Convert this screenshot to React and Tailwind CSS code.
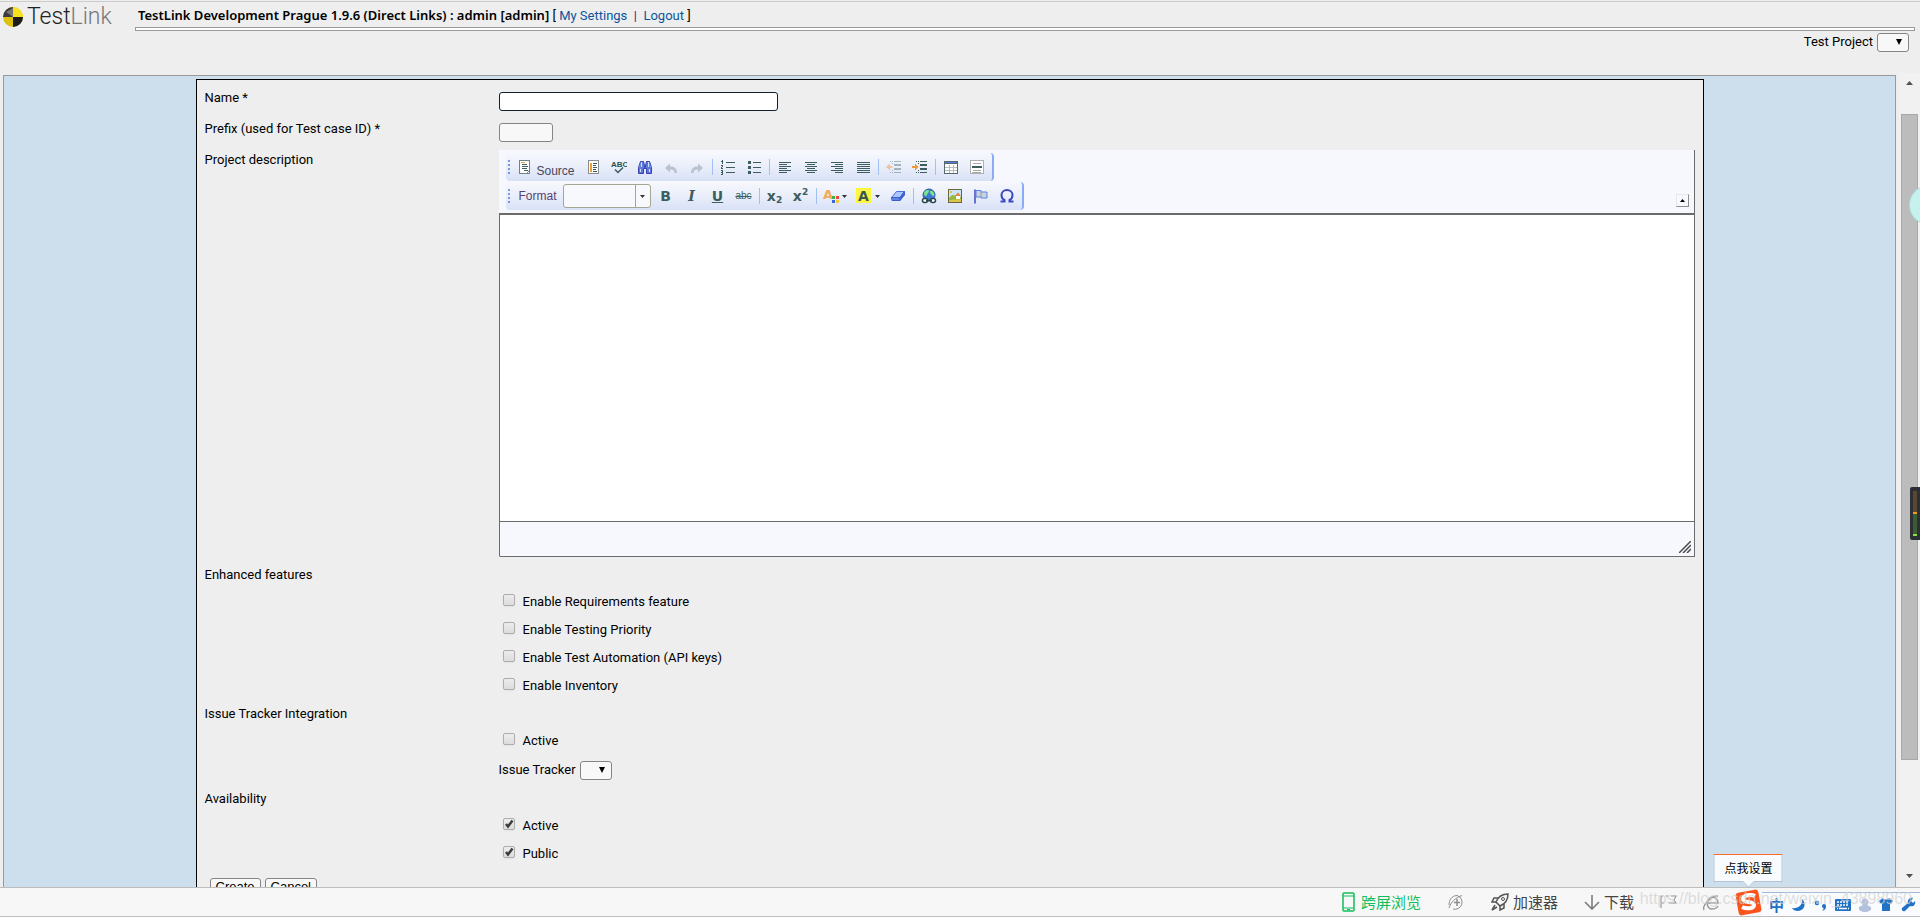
import { useState } from "react";

const FEATURES = [
  { id: "requirements", label: "Enable Requirements feature" },
  { id: "priority", label: "Enable Testing Priority" },
  { id: "automation", label: "Enable Test Automation (API keys)" },
  { id: "inventory", label: "Enable Inventory" },
];

const Svg = ({ w = 16, h = 16, children, className = "" }) => (
  <svg
    width={w}
    height={h}
    viewBox={`0 0 ${w} ${h}`}
    fill="none"
    className={`shrink-0 ${className}`}
    aria-hidden="true"
  >
    {children}
  </svg>
);

const Lines = ({ rows, color = "#3d5d5f" }) => (
  <g fill={color} shapeRendering="crispEdges">
    {rows.map(([x, y, w, h = 1], i) => (
      <rect key={i} x={x} y={y} width={w} height={h} />
    ))}
  </g>
);

/* ---------- toolbar icons ---------- */

const SourceIcon = () => (
  <Svg>
    <rect x="2.5" y="1.5" width="10" height="13" fill="#fff" stroke="#6c8586" />
    <Lines rows={[[5, 5, 5], [5, 7, 6], [5, 9, 5], [7, 11, 4]]} />
    <Lines color="#eda54c" rows={[[4, 3, 4]]} />
    <path d="M9.500 14.500 L12.500 11.500" stroke="#6c8586" />
  </Svg>
);

const TemplatesIcon = () => (
  <Svg>
    <rect x="3.500" y="1.500" width="10" height="13" fill="#fff" stroke="#8c8c8c" />
    <Lines rows={[[8, 4, 4], [8, 6, 3], [8, 8, 4], [8, 10, 3], [8, 12, 4]]} />
    <Lines color="#f0a030" rows={[[5, 4, 2, 9]]} />
  </Svg>
);

const SpellIcon = () => (
  <Svg>
    <text x="0" y="8" fontSize="8" fontWeight="bold" fontFamily="Liberation Sans, sans-serif" fill="#2c5154">
      ABC
    </text>
    <path d="M4 10.500 L7 13.500 L12 8.500" stroke="#3d5d5f" strokeWidth="1.500" />
  </Svg>
);

const FindIcon = () => (
  <Svg>
    <path d="M3.500 2.500h3l1 4h1l1-4h3l2 6v6h-5v-5h-3v5h-5v-6z" fill="#5f78dc" stroke="#3b3fb0" />
    <path d="M4.500 3v5M11.500 3v5M3.500 10v3M12.500 10v3" stroke="#cfe2ff" />
    <path d="M2.500 8.500l1-4M13.500 8.500l-1-4" stroke="#5f9cf0" />
    <path d="M7 6.500h2v2h-2z" fill="#3b3fb0" />
  </Svg>
);

const UndoIcon = ({ flip }) => (
  <Svg className={flip ? "-scale-x-100" : ""}>
    <path d="M2 9 L7 4.500 V7.500 C11 7.500 14 9 14 14 H11.500 C11.500 11.500 10 10.500 7 10.500 V13.500 Z" fill="#b9c2cd" />
  </Svg>
);

const NumberedIcon = () => (
  <Svg>
    <Lines
      rows={[
        [6, 3, 9], [6, 8, 9], [6, 13, 9],
        [2, 1, 1, 4], [1, 2, 1],
        [1, 6, 2], [2, 7, 1], [1, 8, 1], [1, 9, 2],
        [1, 11, 2], [2, 12, 1], [1, 13, 2], [2, 14, 1], [1, 15, 2],
      ]}
    />
  </Svg>
);

const BulletedIcon = () => (
  <Svg>
    <Lines rows={[[2, 2, 3, 3], [2, 7, 3, 3], [2, 12, 3, 3], [7, 3, 8], [7, 8, 8], [7, 13, 8]]} />
  </Svg>
);

const ALIGN = {
  left: [[2, 3, 12], [2, 5, 8], [2, 7, 12], [2, 9, 8], [2, 11, 12], [2, 13, 8]],
  center: [[2, 3, 12], [4, 5, 8], [2, 7, 12], [4, 9, 8], [2, 11, 12], [4, 13, 8]],
  right: [[2, 3, 12], [6, 5, 8], [2, 7, 12], [6, 9, 8], [2, 11, 12], [6, 13, 8]],
  justify: [[2, 3, 13], [2, 5, 13], [2, 7, 13], [2, 9, 13], [2, 11, 13], [2, 13, 13]],
};

const AlignIcon = ({ type }) => (
  <Svg>
    <Lines rows={ALIGN[type]} />
  </Svg>
);

const IndentIcon = ({ out }) => (
  <Svg className={out ? "opacity-40" : ""}>
    <Lines
      rows={[
        [4, 2, 1], [6, 2, 1], [8, 2, 7], [8, 5, 7, 2], [8, 9, 7, 2],
        [4, 13, 1], [6, 13, 1], [8, 13, 7], [6, 4, 1], [6, 11, 1],
      ]}
    />
    {out ? (
      <path d="M0 8 L4 4.500 V7 H6.500 V9 H4 V11.500 Z" fill="#f08a1c" />
    ) : (
      <path d="M6.500 8 L3 4.500 V7 H0 V9 H3 V11.500 Z" fill="#f0983c" />
    )}
  </Svg>
);

const TableIcon = () => (
  <Svg>
    <rect x="1.500" y="2.500" width="13" height="12" fill="#fff" stroke="#57696c" />
    <rect x="1" y="2" width="14" height="3" fill="#57696c" />
    <rect x="2" y="3" width="12" height="1" fill="#4f7be0" />
    <path d="M6.500 6v8M10.500 6v8M2 8.500h12M2 11.500h12" stroke="#b4bcbe" shapeRendering="crispEdges" />
  </Svg>
);

const RuleIcon = () => (
  <Svg>
    <rect x="1.500" y="1.500" width="13" height="13" fill="#fff" stroke="#b0b0b0" />
    <Lines color="#a8a8a8" rows={[[4, 4, 8], [4, 11, 8], [3, 13, 9]]} />
    <Lines rows={[[3, 7, 10, 2]]} />
  </Svg>
);

const EraserIcon = () => (
  <Svg>
    <path d="M1.500 9.500 L6.500 3.500 H14.500 L10 9.500 Z" fill="#a9c6ff" stroke="#4a6fd8" />
    <path d="M1.500 9.500 H10 V12.500 H2 Z" fill="#5d86ea" stroke="#3f5fc8" />
    <path d="M10 9.500 L14.500 3.500 V7 L10 12.500 Z" fill="#3f66d8" stroke="#3f5fc8" />
  </Svg>
);

const LinkIcon = () => (
  <Svg>
    <circle cx="8" cy="7" r="6" fill="#3f78d8" stroke="#2b56a8" />
    <path d="M3 5 C4 2 8 1 8 3 C8 5 6 5 6 7 C5 9 3 8 3 5Z M9 3 C12 2 14 6 13 8 C11 9 11 6 9.500 6Z" fill="#7ae884" />
    <rect x="1.500" y="10.500" width="5" height="4" rx="2" fill="#fff" stroke="#25484a" strokeWidth="1.500" />
    <rect x="9.500" y="10.500" width="5" height="4" rx="2" fill="#fff" stroke="#25484a" strokeWidth="1.500" />
    <path d="M5 12.500h6" stroke="#25484a" strokeWidth="1.500" />
  </Svg>
);

const ImageIcon = () => (
  <Svg>
    <rect x="1.500" y="1.500" width="13" height="13" fill="#c7e6f6" stroke="#6a6444" />
    <path d="M2 10 L5 7 L14 9 V14 H2Z" fill="#8fba3c" />
    <path d="M2 12 L14 11 V14 H2Z" fill="#d9c64a" />
    <rect x="9" y="8" width="4" height="3" fill="#fff" />
    <path d="M7.500 8 L11 4.500 L14 8Z" fill="#e6863a" />
    <rect x="3" y="3" width="2" height="2" fill="#f3b93a" />
  </Svg>
);

const FlagIcon = () => (
  <Svg>
    <path d="M2 1.500v14" stroke="#3e48c0" strokeWidth="1.500" />
    <path d="M3 2.500h5v1.500h6v6H8V9H3z" fill="#ccd2dd" stroke="#5b82e0" />
    <path d="M8 4v5" stroke="#8b96ad" />
  </Svg>
);

const OmegaIcon = () => (
  <Svg>
    <path
      d="M1.500 13.500H5.500V12C3.500 11 2.500 9.500 2.500 7.200C2.500 4 5 2 8 2C11 2 13.500 4 13.500 7.200C13.500 9.500 12.500 11 10.500 12V13.500H14.500"
      stroke="#3e48c0"
      strokeWidth="2"
    />
  </Svg>
);

const TextColorIcon = () => (
  <Svg>
    <text x="0" y="11" fontSize="13" fontWeight="bold" fontFamily="DejaVu Sans, sans-serif" fill="#f2ab5c">
      A
    </text>
    <g shapeRendering="crispEdges">
      <rect x="9" y="8" width="3" height="3" fill="#3fae4a" />
      <rect x="13" y="8" width="3" height="3" fill="#f04438" />
      <rect x="9" y="12" width="3" height="3" fill="#3a66e0" />
      <rect x="13" y="12" width="3" height="3" fill="#f8c838" />
    </g>
  </Svg>
);

const BgColorIcon = () => (
  <Svg>
    <rect width="15" height="15" fill="#fbf73c" />
    <text x="2" y="13" fontSize="14" fontWeight="bold" fontFamily="DejaVu Sans, sans-serif" fill="#3a5658">
      A
    </text>
  </Svg>
);

const SmallArrow = () => (
  <Svg w={5} h={3}>
    <path d="M0 0h5L2.500 3z" fill="#333" />
  </Svg>
);

/* ---------- toolbar parts ---------- */

const ToolButton = ({ title, wide, children }) => (
  <button
    type="button"
    title={title}
    className={`flex h-full shrink-0 items-center justify-center text-[#3d5d5f] ${
      wide ? "w-[33px]" : "w-[26px]"
    }`}
  >
    {children}
  </button>
);

const Separator = () => <span className="mx-[2px] h-4 w-px shrink-0 bg-[#a3c0f6]" />;

const Grip = () => (
  <Svg w={3} h={15} className="ml-[2px]">
    <g fill="#7b97e3">
      <rect y="0" width="2" height="2" />
      <rect y="4" width="2" height="2" />
      <rect y="8" width="2" height="2" />
      <rect y="12" width="2" height="2" />
    </g>
  </Svg>
);

const ToolGroup = ({ children }) => (
  <div className="flex h-7 w-max items-center rounded-[4px] border-r-2 border-[#8aabf5] bg-linear-to-b from-[#f7f8fd] via-[#e9eefa] to-[#d9e1f7] pr-[2px]">
    <Grip />
    {children}
  </div>
);

const Editor = () => (
  <div className="flex h-[407px] flex-col border-x border-b border-[#6b6b6b] border-l-transparent bg-[#f7f8fd]">
    <div className="flex h-[63px] shrink-0 items-end justify-between pt-[3px] pr-[5px] pb-[3px] pl-[6px]">
      <div className="flex flex-col gap-px">
        <ToolGroup>
          <button
            type="button"
            className="flex h-full w-[69px] shrink-0 items-center gap-1 pl-[6px] font-['Liberation_Sans',sans-serif] text-xs text-[#474758]"
          >
            <SourceIcon />
            <span className="pt-2">Source</span>
          </button>
          <ToolButton title="Templates"><TemplatesIcon /></ToolButton>
          <ToolButton title="Check Spelling"><SpellIcon /></ToolButton>
          <ToolButton title="Find"><FindIcon /></ToolButton>
          <ToolButton title="Undo"><UndoIcon /></ToolButton>
          <ToolButton title="Redo"><UndoIcon flip /></ToolButton>
          <Separator />
          <ToolButton title="Insert/Remove Numbered List"><NumberedIcon /></ToolButton>
          <ToolButton title="Insert/Remove Bulleted List"><BulletedIcon /></ToolButton>
          <Separator />
          <ToolButton title="Left Justify"><AlignIcon type="left" /></ToolButton>
          <ToolButton title="Center Justify"><AlignIcon type="center" /></ToolButton>
          <ToolButton title="Right Justify"><AlignIcon type="right" /></ToolButton>
          <ToolButton title="Block Justify"><AlignIcon type="justify" /></ToolButton>
          <Separator />
          <ToolButton title="Decrease Indent"><IndentIcon out /></ToolButton>
          <ToolButton title="Increase Indent"><IndentIcon /></ToolButton>
          <Separator />
          <ToolButton title="Table"><TableIcon /></ToolButton>
          <ToolButton title="Insert Horizontal Line"><RuleIcon /></ToolButton>
        </ToolGroup>
        <ToolGroup>
          <label
            htmlFor="format"
            className="w-[52px] shrink-0 pl-2 font-['Liberation_Sans',sans-serif] text-xs text-[#5b3f74]"
          >
            Format
          </label>
          <div className="relative flex h-6 w-[88px] shrink-0 items-center rounded-[3px] border border-[#a4a693] bg-[#f8f9fd]">
            <select id="format" className="h-full w-full appearance-none bg-transparent" />
            <span className="pointer-events-none absolute inset-y-0 right-0 flex w-[15px] items-center justify-center border-l border-[#a4a693]">
              <SmallArrow />
            </span>
          </div>
          <span className="w-[2px] shrink-0" />
          <ToolButton title="Bold">
            <span className="font-['DejaVu_Sans',sans-serif] text-sm font-bold">B</span>
          </ToolButton>
          <ToolButton title="Italic">
            <span className="font-['DejaVu_Serif',serif] text-sm font-bold italic">I</span>
          </ToolButton>
          <ToolButton title="Underline">
            <span className="font-['DejaVu_Sans',sans-serif] text-sm font-bold underline">U</span>
          </ToolButton>
          <ToolButton title="Strike Through">
            <span className="font-['Liberation_Sans',sans-serif] text-[10px] line-through">abc</span>
          </ToolButton>
          <Separator />
          <ToolButton title="Subscript">
            <span className="flex items-center font-['DejaVu_Sans',sans-serif] text-sm font-bold leading-4">
              x<span className="pt-2 text-[9px] leading-3">2</span>
            </span>
          </ToolButton>
          <ToolButton title="Superscript">
            <span className="flex items-center font-['DejaVu_Sans',sans-serif] text-sm font-bold leading-4">
              x<span className="pb-2 text-[9px] leading-3">2</span>
            </span>
          </ToolButton>
          <Separator />
          <ToolButton title="Text Color" wide>
            <span className="flex items-center gap-[3px]"><TextColorIcon /><SmallArrow /></span>
          </ToolButton>
          <ToolButton title="Background Color" wide>
            <span className="flex items-center gap-[3px]"><BgColorIcon /><SmallArrow /></span>
          </ToolButton>
          <ToolButton title="Remove Format"><EraserIcon /></ToolButton>
          <Separator />
          <ToolButton title="Link"><LinkIcon /></ToolButton>
          <ToolButton title="Image"><ImageIcon /></ToolButton>
          <ToolButton title="Anchor"><FlagIcon /></ToolButton>
          <ToolButton title="Insert Special Character"><OmegaIcon /></ToolButton>
        </ToolGroup>
      </div>
      <button
        type="button"
        title="Collapse Toolbar"
        className="mb-[3px] flex size-[13px] items-center justify-center border border-[#e6e6ee] border-r-[#8c8c8c] border-b-[#8c8c8c]"
      >
        <Svg w={5} h={3}>
          <path d="M0 3h5L2.500 0z" fill="#000" />
        </Svg>
      </button>
    </div>
    <textarea
      aria-label="Project description"
      className="-ml-px min-h-0 flex-1 resize-none border-t-2 border-l border-b border-[#6b6b6b] bg-white p-2 outline-none"
    />
    <div className="-ml-px flex h-[34px] shrink-0 items-end justify-end border-l border-[#6b6b6b] p-[3px]">
      <Svg w={12} h={12}>
        <path d="M0 12L12 0M4 12L12 4M8 12L12 8" stroke="#4a4a4a" strokeWidth="1.500" />
      </Svg>
    </div>
  </div>
);

/* ---------- form parts ---------- */

const Row = ({ label, htmlFor, children }) => (
  <div className="flex min-h-[31px] items-start">
    <label htmlFor={htmlFor} className="w-[294px] shrink-0 leading-6">
      {label}
    </label>
    <div className="min-w-0 flex-1">{children}</div>
  </div>
);

const Heading = ({ children }) => <h2 className="flex h-[27px] items-center">{children}</h2>;

const Check = ({ id, label, initial = false }) => {
  const [checked, setChecked] = useState(initial);

  return (
    <div className="ml-[294px] flex h-7 items-center gap-2 pl-1">
      <span className="relative mb-1 flex size-3">
        <input
          id={id}
          type="checkbox"
          checked={checked}
          onChange={(e) => setChecked(e.target.checked)}
          className="size-3 appearance-none rounded-[2px] border border-[#adadad] bg-linear-to-b from-[#ededed] to-[#dcdcdc] shadow-xs"
        />
        {checked && (
          <Svg w={12} h={12} className="pointer-events-none absolute inset-0">
            <path d="M3 6L5 8.500L9.500 2.500" stroke="#3c3c3c" strokeWidth="2.500" />
          </Svg>
        )}
      </span>
      <label htmlFor={id}>{label}</label>
    </div>
  );
};

const EmptySelect = ({ id }) => (
  <span className="relative flex">
    <select
      id={id}
      className="h-[19px] w-8 appearance-none rounded-[3px] border border-[#858585] bg-[#f8f8f8]"
    />
    <Svg w={6} h={6} className="pointer-events-none absolute top-[6px] right-[7px]">
      <path d="M0 0h6L3 6z" fill="#000" />
    </Svg>
  </span>
);

const FormButton = ({ children }) => (
  <button
    type="button"
    className="h-5 rounded-[3px] border border-[#858585] bg-[#f8f8f8] px-[5px] pb-1 font-['Liberation_Sans',sans-serif] leading-4"
  >
    {children}
  </button>
);

const Header = () => (
  <header className="h-[72px] shrink-0 border-t border-[#ccc]">
    <div className="flex pr-[5px]">
      <div className="flex w-[135px] shrink-0 items-center gap-1 pl-[3px] font-['Roboto',sans-serif] text-[23px] leading-[30px] font-light">
        <Svg w={20} h={20}>
          <circle cx="10" cy="10" r="10" fill="#dcc010" />
          <path d="M10 10V0A10 10 0 0 1 20 10Z" fill="#f8e21c" />
          <path d="M10 10H0A10 10 0 0 1 10 0Z" fill="#3a3a3a" />
          <path d="M10 10H20A10 10 0 0 1 10 20Z" fill="#1c1c1c" />
          <path d="M10 10V1L3 5Z" fill="#777" />
        </Svg>
        <span className="text-[#222]">
          Test<span className="text-[#777]">Link</span>
        </span>
      </div>
      <div className="min-w-0 flex-1">
        <div className="h-[25px] pl-[3px] leading-[26px]">
          <b className="font-['Noto_Sans',sans-serif] font-semibold">
            TestLink Development Prague 1.9.6 (Direct Links) : admin [admin]
          </b>{" "}
          [{" "}
          <a href="#settings" className="text-[#0b559d]">My Settings</a>
          <span className="text-[#800060]"> &nbsp;|&nbsp; </span>
          <a href="#logout" className="text-[#0b559d]">Logout</a> ]
        </div>
        <div className="h-1 border border-[#999] bg-white" />
      </div>
    </div>
    <div className="flex items-center justify-end gap-1 pr-[11px]">
      <label htmlFor="project">Test Project</label>
      <EmptySelect id="project" />
    </div>
  </header>
);

const ScrollBar = () => (
  <div className="flex w-[21px] shrink-0 flex-col items-center bg-[#f1f1f1] pt-2 pr-px pb-[9px]">
    <Svg w={7} h={4}>
      <path d="M0 4h7L3.500 0z" fill="#505050" />
    </Svg>
    <div className="mt-[29px] flex min-h-0 w-[17px] flex-1 flex-col">
      <div className="h-[85%] border border-[#a8a8a8] bg-[#bcbcbc]" />
    </div>
    <Svg w={7} h={4}>
      <path d="M0 0h7L3.500 4z" fill="#505050" />
    </Svg>
  </div>
);

/* ---------- browser status bar ---------- */

const StatusBar = () => (
  <footer className="relative flex h-[30px] shrink-0 items-center justify-end border-y border-[#bdbdbd] bg-[#f7f7f7] font-['Noto_Sans_CJK_SC',sans-serif] text-[15px] text-[#444]">
    <button type="button" className="mr-[27px] flex items-center gap-[6px] text-[#10bf5c]">
      <Svg w={13} h={20}>
        <rect x="1" y="1" width="11" height="18" rx="1" stroke="#10bf5c" strokeWidth="1.500" />
        <path d="M1 4h11M1 16h11" stroke="#10bf5c" />
        <path d="M5 17.500h3" stroke="#10bf5c" />
      </Svg>
      跨屏浏览
    </button>
    <button type="button" title="加速" className="mr-[26px]">
      <Svg w={17} h={17}>
        <path d="M5 15A7 7 0 1 0 9 1.500C4 1.500 1 6 1 11M1 14C3 8 7 4 14 1.500" stroke="#8c8c8c" />
        <path d="M9 5v7M6 8.500h6" stroke="#8c8c8c" strokeWidth="1.500" />
      </Svg>
    </button>
    <button type="button" className="mr-[26px] flex items-center gap-1">
      <Svg w={18} h={18}>
        <path d="M5 9C7 4 11 1 17 1C17 7 14 11 9 13Z" stroke="#555" strokeWidth="1.500" />
        <path d="M7 5H3L1 9H5M13 11V15L9 17V13M4 12L1 17L6 14" stroke="#555" strokeWidth="1.500" />
        <circle cx="12" cy="6" r="1.500" stroke="#555" />
      </Svg>
      加速器
    </button>
    <button type="button" className="mr-[26px] flex items-center gap-1">
      <Svg w={16} h={16}>
        <path d="M8 1V14M1 8L8 15L15 8" stroke="#777" strokeWidth="1.500" />
      </Svg>
      下载
    </button>
    <Svg w={17} h={14} className="mr-[26px]">
      <path d="M3 1H1V13M6 1h2M11 1h5L14 5L16 8H9M4 8H1" stroke="#888" />
    </Svg>
    <Svg w={17} h={17} className="mr-[15px]">
      <path d="M4 9h11C15 4 9 1 6 5C3 8 4 15 9 15C12 15 14 14 15 12M1 16C-1 12 7 2 15 2" stroke="#999" strokeWidth="1.500" />
    </Svg>
    <div className="relative">
      <Svg w={27} h={27}>
        <rect x="2" y="2" width="23" height="23" rx="3" fill="#fa541c" transform="rotate(-10 13.500 13.500)" />
        <path
          d="M20 7C16 5 8 6 8 10C8 14 19 12 19 16C19 20 11 20 7 18"
          stroke="#fff"
          strokeWidth="4"
        />
      </Svg>
      <div className="absolute bottom-[34px] left-1/2 flex h-7 w-[69px] -translate-x-1/2 items-center justify-center border border-[#b4c3d6] border-t-[#ff6a28] bg-[#f9fcff] text-xs text-black">
        点我设置
        <Svg w={12} h={7} className="absolute top-[26px]">
          <path d="M0 0h12L6 6z" fill="#f9fcff" />
          <path d="M0 0L6 6L12 0" stroke="#b4c3d6" />
        </Svg>
      </div>
    </div>
    <div className="flex h-6 items-center gap-2 self-end border-t border-[#9fbbdc] bg-[#fafcff] pr-1 pl-[7px] text-[#1f72c6]">
      <span className="text-[15px] leading-5 font-bold">中</span>
      <Svg w={14} h={14}>
        <path d="M10 1C15 6 12 13 6 13C3 13 1 12 0 10C6 11 11 7 10 1Z" fill="currentColor" />
      </Svg>
      <Svg w={13} h={14}>
        <circle cx="3" cy="5" r="1.500" stroke="currentColor" strokeWidth="1.500" />
        <path d="M8 8a2 2 0 1 1 4 0C12 11 11 12 8 13C9 12 10 11 9.500 10C8.500 10 8 9 8 8Z" fill="currentColor" />
      </Svg>
      <Svg w={16} h={12}>
        <rect width="16" height="12" rx="1" fill="currentColor" />
        <path d="M2 3h12M2 6h12" stroke="#fff" strokeWidth="1.500" strokeDasharray="2 1" />
        <path d="M4 9.500h8M2 9.500h1M13 9.500h1" stroke="#fff" strokeWidth="1.500" />
      </Svg>
      <Svg w={12} h={14}>
        <circle cx="6" cy="4" r="3.500" fill="#b3c1dc" />
        <path d="M0 9L4 7H8L12 9V12L8 14H4L0 12Z" fill="#b3c1dc" />
      </Svg>
      <Svg w={14} h={13}>
        <path d="M4 0C5 2 9 2 10 0L14 3L12 6L11 5V13H3V5L2 6L0 3Z" fill="currentColor" />
      </Svg>
      <Svg w={15} h={15}>
        <path d="M1 11L7 6C6 3 9 0 12 1L10 4L12 6L14 4C15 8 12 10 9 9L4 14C2 15 0 13 1 11Z" fill="currentColor" />
      </Svg>
    </div>
    <span className="pointer-events-none absolute right-2 bottom-[7px] font-['Liberation_Sans',sans-serif] text-base leading-5 text-[#d0d0d0]/70">
      https://blog.csdn.net/weixin_43898960
    </span>
  </footer>
);

export default function App() {
  const [name, setName] = useState("");
  const [prefix, setPrefix] = useState("");

  return (
    <div className="relative flex h-screen flex-col overflow-hidden bg-[#eee] pt-px font-['Roboto','Noto_Sans_CJK_SC',sans-serif] text-[13px] leading-5 text-black">
      <Header />
      <div className="flex min-h-0 flex-1">
        <main className="mt-[2px] mr-[3px] ml-[3px] min-w-0 flex-1 overflow-hidden border-x border-t border-[#999] bg-[#cddeed] px-[3px] pt-[3px]">
          <form
            className="mx-auto w-4/5 border border-black bg-[#eee] px-2 pt-[6px] pb-10"
            onSubmit={(e) => e.preventDefault()}
          >
            <Row label="Name *" htmlFor="name">
              <input
                id="name"
                type="text"
                value={name}
                onChange={(e) => setName(e.target.value)}
                className="mt-[6px] block h-[19px] w-[279px] rounded-[3px] border border-[#10202f] bg-white px-1 outline-none"
              />
            </Row>
            <Row label="Prefix (used for Test case ID) *" htmlFor="prefix">
              <input
                id="prefix"
                type="text"
                value={prefix}
                onChange={(e) => setPrefix(e.target.value)}
                className="mt-[6px] block h-[19px] w-[54px] rounded-[3px] border border-[#858585] bg-[#f8f8f8] px-1"
              />
            </Row>
            <Row label="Project description">
              <div className="pt-[2px] pb-1">
                <Editor />
              </div>
            </Row>

            <Heading>Enhanced features</Heading>
            {FEATURES.map((feature) => (
              <Check key={feature.id} id={feature.id} label={feature.label} />
            ))}

            <Heading>Issue Tracker Integration</Heading>
            <Check id="tracker-active" label="Active" />
            <div className="ml-[294px] flex h-[30px] items-center gap-1">
              <label htmlFor="tracker">Issue Tracker</label>
              <EmptySelect id="tracker" />
            </div>

            <Heading>Availability</Heading>
            <Check id="active" label="Active" initial />
            <Check id="public" label="Public" initial />

            <div className="flex gap-1 pt-[10px] pl-[5px]">
              <FormButton>Create</FormButton>
              <FormButton>Cancel</FormButton>
            </div>
          </form>
        </main>
        <ScrollBar />
      </div>
      <StatusBar />

      {/* desktop widgets docked to the right edge */}
      <div className="pointer-events-none absolute top-[185px] right-0 h-10 w-[11px] overflow-hidden">
        <div className="size-10 rounded-full border border-[#a9e0da] bg-[#c6f1ec]" />
      </div>
      <div className="pointer-events-none absolute top-[487px] right-0 h-[53px] w-[10px] rounded-l-[2px] bg-[#2b3036] pt-1 pl-[3px]">
        <div className="h-[21px] w-1 bg-[#5c4630]" />
        <div className="h-[2px] w-1 bg-[#f09a1c]" />
        <div className="h-5 w-1 bg-[#3c5c34]" />
        <div className="h-[2px] w-1 bg-[#8ae03c]" />
      </div>
    </div>
  );
}
